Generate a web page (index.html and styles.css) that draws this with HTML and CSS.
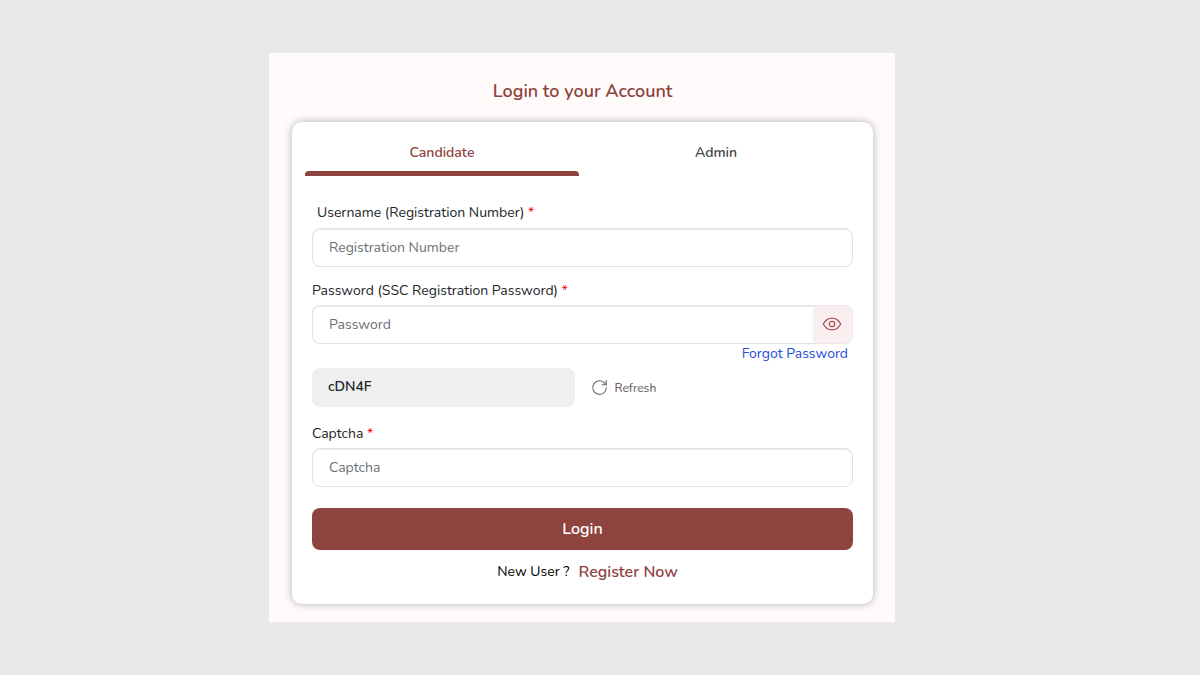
FILE: index.html
```html
<!DOCTYPE html>
<html lang="en">
<head>
    <meta charset="UTF-8">
    <meta name="viewport" content="width=device-width, initial-scale=1.0">
    <title>Login to your Account</title>
    <link rel="stylesheet" href="styles.css">
</head>
<body>
    <main class="panel">
        <h1>Login to your Account</h1>

        <div class="card">
            <!-- Tabs -->
            <div class="tabs" role="tablist">
                <button type="button" class="tab active" role="tab" aria-selected="true">Candidate</button>
                <button type="button" class="tab" role="tab" aria-selected="false">Admin</button>
            </div>

            <!-- Login Form -->
            <form class="login-form" action="/login" method="post">
                <div class="input-group">
                    <label for="username" class="indent">Username (Registration Number) <span class="required">*</span></label>
                    <input type="text" id="username" name="username" placeholder="Registration Number" required>
                </div>

                <div class="input-group">
                    <label for="password">Password (SSC Registration Password) <span class="required">*</span></label>
                    <div class="password-box">
                        <input type="password" id="password" name="password" placeholder="Password" required>
                        <button type="button" class="eye" aria-label="Show password">
                            <svg width="20" height="20" viewBox="0 0 20 20" fill="none" stroke="currentColor" stroke-width="1.2">
                                <path d="M1.2 10C3.4 6.2 6.4 4.1 10 4.1S16.6 6.2 18.8 10C16.6 13.8 13.6 15.9 10 15.9S3.4 13.8 1.2 10Z" stroke-linejoin="round"/>
                                <circle cx="10" cy="10" r="2.7"/>
                            </svg>
                        </button>
                    </div>
                </div>

                <div class="forgot">
                    <a href="#">Forgot Password</a>
                </div>

                <div class="captcha-row">
                    <output class="captcha-code">cDN4F</output>
                    <button type="button" class="refresh">
                        <svg width="17" height="17" viewBox="0 0 17 17" fill="none" stroke="currentColor" stroke-width="1.1" stroke-linecap="round" stroke-linejoin="round">
                            <path d="M15.3 8.7A6.8 6.8 0 1 1 13.9 4.4L15.1 5.6"/>
                            <path d="M15.2 1.6V5.7H11.2"/>
                        </svg>
                        Refresh
                    </button>
                </div>

                <div class="input-group">
                    <label for="captcha">Captcha <span class="required">*</span></label>
                    <input type="text" id="captcha" name="captcha" placeholder="Captcha" required>
                </div>

                <button type="submit" class="login-btn">Login</button>

                <p class="register">New User ? <a href="#">Register Now</a></p>
            </form>
        </div>
    </main>
</body>
</html>
```
FILE: styles.css
```css
* {
    box-sizing: border-box;
}

body {
    font-family: Nunito, "Open Sans", sans-serif;
    font-size: 14px;
    line-height: 20px;
    display: flex;
    justify-content: center;
    align-items: center;
    min-height: 100vh;
    margin: 0;
    padding-right: 36px;
    color: #212529;
    background-color: #e9e9e9;
}

button,
input {
    font-family: inherit;
    font-size: 14px;
    line-height: 20px;
}

button {
    border: none;
    cursor: pointer;
}

a {
    text-decoration: none;
}

.panel {
    width: 100%;
    max-width: 626px;
    padding: 24px 22px 18px 23px;
    background-color: #fffbfa;
}

h1 {
    margin: 0 0 17px;
    font-size: 18px;
    font-weight: 600;
    line-height: 28px;
    text-align: center;
    color: #8e433e;
}

.card {
    padding: 0 20px 20px;
    border-radius: 10px;
    background-color: #fff;
    box-shadow: 0 0 8px rgba(0, 0, 0, 0.3);
}

/* Tabs */
.tabs {
    display: flex;
    margin-left: -7px;
}

.tab {
    flex: 1;
    padding: 21px 0 0;
    font-weight: 600;
    color: #444;
    background: none;
}

.tab::after {
    content: "";
    display: block;
    height: 5px;
    margin-top: 8px;
    border-radius: 4px 4px 0 0;
}

.tab.active {
    color: #8e433e;
}

.tab.active::after {
    background-color: #8e433e;
}

/* Form */
.login-form {
    padding-top: 27px;
}

.input-group {
    display: flex;
    flex-direction: column;
    gap: 4px;
}

.input-group + .input-group {
    margin-top: 14px;
}

.input-group .indent {
    padding-left: 5px;
    margin-bottom: 1px;
}

.required {
    color: #f00;
}

.input-group input {
    width: 100%;
    height: 39px;
    padding: 0 16px;
    border: 1px solid #dee2e6;
    border-radius: 8px;
    outline: none;
    color: #212529;
    background-color: #fff;
    box-shadow: inset 0 1px 1px rgba(0, 0, 0, 0.08);
}

.input-group input::placeholder {
    color: #6c7074;
    opacity: 1;
}

.password-box {
    display: flex;
}

.password-box input {
    flex: 1;
    border-right: none;
    border-radius: 8px 0 0 8px;
}

.eye {
    display: flex;
    justify-content: center;
    align-items: center;
    width: 40px;
    padding: 0 2px 2px 0;
    border: 1px solid #eee6e8;
    border-left: none;
    border-radius: 0 8px 8px 0;
    color: #a5524f;
    background-color: #f9eff0;
}

.forgot {
    padding-right: 5px;
    text-align: right;
}

.forgot a {
    color: #1d4ed8;
}

.captcha-row {
    display: grid;
    grid-template-columns: 1fr 1fr;
    gap: 16px;
    margin: 4px 0 17px;
}

.captcha-code {
    height: 39px;
    padding: 9px 16px;
    border-radius: 8px;
    font-weight: 600;
    background-color: #efefef;
}

.refresh {
    display: flex;
    align-items: center;
    justify-self: start;
    gap: 7px;
    padding: 0;
    font-size: 12px;
    font-weight: 500;
    color: #666;
    background: none;
}

.login-btn {
    width: 100%;
    height: 42px;
    margin-top: 21px;
    border-radius: 8px;
    font-size: 16px;
    font-weight: 600;
    color: #fff;
    background-color: #8e433e;
}

.register {
    display: flex;
    justify-content: center;
    gap: 9px;
    margin: 10px 0 0;
    padding-left: 10px;
    line-height: 24px;
    color: #000;
}

.register a {
    font-size: 16px;
    font-weight: 600;
    color: #8e433e;
}
```
